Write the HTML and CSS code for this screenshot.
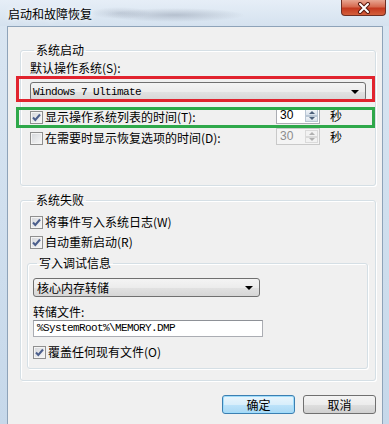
FILE: index.html
```html
<!DOCTYPE html>
<html lang="zh-CN">
<head>
  <meta charset="UTF-8" />
  <title>启动和故障恢复</title>
  <link rel="stylesheet" href="styles.css">
</head>
<body>

  <div class="window">
    <div class="titlebar">
      <span class="title">启动和故障恢复</span>
      <span class="close">
        <svg width="14" height="12" viewBox="0 0 14 12">
          <path d="M3 2 L11 10 M11 2 L3 10" stroke="#5a1a10" stroke-width="4" stroke-linecap="round" />
          <path d="M3 2 L11 10 M11 2 L3 10" stroke="#fff" stroke-width="2" stroke-linecap="round" />
        </svg>
      </span>
    </div>

    <div class="client">

      <!-- 系统启动 -->
      <fieldset class="group boot">
        <legend>系统启动</legend>
        <div class="boot-body">
          <div class="field-label">默认操作系统(S):</div>
          <div class="dropdown">
            <span class="dropdown-text mono">Windows 7 Ultimate</span>
            <span class="arrow"></span>
          </div>

          <div class="row">
            <span class="check checked">
              <svg width="11" height="11" viewBox="0 0 11 11"><path d="M2 5.5 L4.3 8 L9 2.5" fill="none" stroke="#4c5f8c" stroke-width="2" /></svg>
            </span>
            <span class="check-label">显示操作系统列表的时间(T):</span>
            <div class="spin">
              <span class="spin-input">30</span>
              <span class="spin-btns">
                <span class="spin-btn"><span class="tri-up"></span></span>
                <span class="spin-btn"><span class="tri-down"></span></span>
              </span>
            </div>
            <span class="unit">秒</span>
          </div>

          <div class="row">
            <span class="check"></span>
            <span class="check-label">在需要时显示恢复选项的时间(D):</span>
            <div class="spin disabled">
              <span class="spin-input">30</span>
              <span class="spin-btns">
                <span class="spin-btn"><span class="tri-up"></span></span>
                <span class="spin-btn"><span class="tri-down"></span></span>
              </span>
            </div>
            <span class="unit">秒</span>
          </div>

          <!-- annotations -->
          <div class="mark mark-red"></div>
          <div class="mark mark-green"></div>
        </div>
      </fieldset>

      <!-- 系统失败 -->
      <fieldset class="group fail">
        <legend>系统失败</legend>
        <div class="check-row">
          <span class="check checked">
            <svg width="11" height="11" viewBox="0 0 11 11"><path d="M2 5.5 L4.3 8 L9 2.5" fill="none" stroke="#4c5f8c" stroke-width="2" /></svg>
          </span>
          <span class="check-label">将事件写入系统日志(W)</span>
        </div>
        <div class="check-row">
          <span class="check checked">
            <svg width="11" height="11" viewBox="0 0 11 11"><path d="M2 5.5 L4.3 8 L9 2.5" fill="none" stroke="#4c5f8c" stroke-width="2" /></svg>
          </span>
          <span class="check-label">自动重新启动(R)</span>
        </div>

        <fieldset class="group debug">
          <legend>写入调试信息</legend>
          <div class="dropdown dump-type">
            <span class="dropdown-text">核心内存转储</span>
            <span class="arrow"></span>
          </div>
          <div class="field-label dump-label">转储文件:</div>
          <div class="textbox mono">%SystemRoot%\MEMORY.DMP</div>
          <div class="check-row">
            <span class="check checked">
              <svg width="11" height="11" viewBox="0 0 11 11"><path d="M2 5.5 L4.3 8 L9 2.5" fill="none" stroke="#4c5f8c" stroke-width="2" /></svg>
            </span>
            <span class="check-label">覆盖任何现有文件(O)</span>
          </div>
        </fieldset>
      </fieldset>

      <div class="actions">
        <button class="btn btn-default">确定</button>
        <button class="btn">取消</button>
      </div>

    </div>
  </div>

</body>
</html>
```

FILE: styles.css
```css
body {
  margin: 0;
  font-family: "Noto Sans CJK SC", "Liberation Sans", sans-serif;
  font-size: 12px;
  color: #000;
}

.window {
  width: 389px;
  height: 424px;
  display: flex;
  flex-direction: column;
  overflow: hidden;
  background: linear-gradient(#dae6f2, #c6d8ea);
}

.titlebar {
  height: 26px;
  display: flex;
  align-items: flex-start;
  background:
    radial-gradient(ellipse 70px 7px at 175px 15px, rgba(110, 120, 140, 0.35), transparent),
    radial-gradient(ellipse 30px 6px at 120px 13px, rgba(120, 130, 150, 0.25), transparent),
    linear-gradient(#e6eef7, #d5e2ef);
}

.title {
  padding: 7px 0 0 8px;
  line-height: 14px;
  text-shadow: 0 0 6px #fff;
}

.close {
  margin-left: auto;
  margin-right: 3px;
  width: 45px;
  height: 16px;
  box-sizing: border-box;
  border: 1px solid #6e2f24;
  border-top: none;
  border-radius: 0 0 4px 4px;
  background: linear-gradient(#e8a692, #d66a50 45%, #c4391f 55%, #d4603c);
  display: flex;
  align-items: center;
  justify-content: center;
}

.client {
  flex: 1;
  margin: 0 6px 0 7px;
  padding: 16px 6px 0 12px;
  border: 1px solid #8ea3b9;
  border-bottom: none;
  background: #f0f0f0;
}

.group {
  margin: 0;
  padding: 4px 9px 40px;
  min-width: 0;
  border: 1px solid #d5dfe5;
  border-radius: 3px;
  box-shadow: inset 1px 1px 0 #fff, 1px 1px 0 #fff;
}

.group legend {
  margin-left: 4px;
  padding: 0 2px;
  line-height: 14px;
}

.boot-body {
  position: relative;
}

.field-label {
  line-height: 14px;
}

.mono {
  font-family: "Liberation Mono", monospace;
  font-size: 11px;
  letter-spacing: -0.6px;
}

.dropdown {
  margin-top: 7px;
  height: 19px;
  box-sizing: border-box;
  padding-left: 2px;
  display: flex;
  align-items: center;
  border: 1px solid #707070;
  border-radius: 3px;
  background: linear-gradient(#f4f4f4, #ececec 50%, #e2e2e2 51%, #d6d6d6);
}

.dropdown-text {
  flex: 1;
  line-height: 14px;
}

.arrow {
  margin-right: 6px;
  border-top: 4px solid #000;
  border-left: 4px solid transparent;
  border-right: 4px solid transparent;
}

.row {
  display: flex;
  align-items: flex-end;
  height: 17px;
  margin-top: 6px;
}

.row + .row {
  margin-top: 4px;
}

.check {
  width: 13px;
  height: 13px;
  flex: none;
  box-sizing: border-box;
  border: 1px solid #8f8f8f;
  background: linear-gradient(135deg, #d4d6da, #f8f8f8);
  box-shadow: inset 0 0 0 1px #f4f4f4;
  display: flex;
  align-items: center;
  justify-content: center;
}

.check-label {
  margin-left: 2px;
  line-height: 14px;
}

.row .check-label {
  flex: 1;
}

.spin {
  display: flex;
  height: 17px;
}

.spin-input {
  width: 28px;
  box-sizing: border-box;
  padding-left: 3px;
  border: 1px solid #abadb3;
  border-right: none;
  background: #fff;
  font-family: "Liberation Sans", sans-serif;
  line-height: 15px;
}

.spin-btns {
  width: 16px;
  box-sizing: border-box;
  padding: 1px;
  display: flex;
  flex-direction: column;
  border: 1px solid #abadb3;
  border-left: none;
  background: #fff;
}

.spin-btn {
  flex: 1;
  display: flex;
  align-items: center;
  justify-content: center;
  border: 1px solid #b9c6d4;
  background: linear-gradient(#f1f4f8, #d9e2eb);
}

.tri-up {
  border-bottom: 3px solid #4c607a;
  border-left: 3px solid transparent;
  border-right: 3px solid transparent;
}

.tri-down {
  border-top: 3px solid #4c607a;
  border-left: 3px solid transparent;
  border-right: 3px solid transparent;
}

.spin.disabled .spin-input {
  color: #8d8d8d;
  border-color: #c9c9c9;
  background: #f4f4f4;
}

.spin.disabled .spin-btns {
  border-color: #c9c9c9;
  background: #f4f4f4;
}

.spin.disabled .spin-btn {
  border-color: #dadada;
  background: #f2f2f2;
}

.spin.disabled .tri-up {
  border-bottom-color: #b0b0b0;
}

.spin.disabled .tri-down {
  border-top-color: #b0b0b0;
}

.unit {
  width: 46px;
  box-sizing: border-box;
  padding-left: 10px;
  line-height: 17px;
  align-self: flex-start;
}

.mark {
  position: absolute;
  left: -14px;
  width: 359px;
  box-sizing: border-box;
  border: 3px solid;
}

.mark-red {
  top: 15px;
  height: 26px;
  border-color: #e1232e;
}

.mark-green {
  top: 46px;
  height: 21px;
  border-color: #2ea84a;
}

.fail {
  margin-top: 7px;
  padding: 7px 9px 11px;
}

.check-row {
  display: flex;
  align-items: center;
  height: 16px;
}

.check-row + .check-row {
  margin-top: 4px;
}

.debug {
  margin: 6px -2px 0 -3px;
  padding: 8px 5px 8px;
}

.dump-type {
  margin-top: 0;
  width: 227px;
}

.dump-type .dropdown-text {
  padding-left: 1px;
}

.dump-label {
  margin-top: 8px;
}

.textbox {
  margin-top: 1px;
  width: 230px;
  height: 17px;
  box-sizing: border-box;
  padding-left: 3px;
  border: 1px solid #abadb3;
  border-top-color: #8e9197;
  background: #fff;
  line-height: 15px;
}

.debug .check-row {
  margin-top: 7px;
}

.actions {
  display: flex;
  justify-content: flex-end;
  gap: 8px;
  margin-top: 14px;
}

.btn {
  width: 73px;
  height: 19px;
  padding: 0;
  border: 1px solid #707070;
  border-radius: 3px;
  background: linear-gradient(#f4f4f4, #ececec 50%, #dfdfdf 51%, #d0d0d0);
  font-family: "Noto Sans CJK SC", sans-serif;
  font-size: 12px;
  line-height: 16px;
}

.btn-default {
  border-color: #3c7fb1;
  background: linear-gradient(#e9f5fc, #d8eefb 50%, #bde3fa 51%, #a9d8f4);
  box-shadow: inset 0 0 0 1px #9fdcfb;
}
```
